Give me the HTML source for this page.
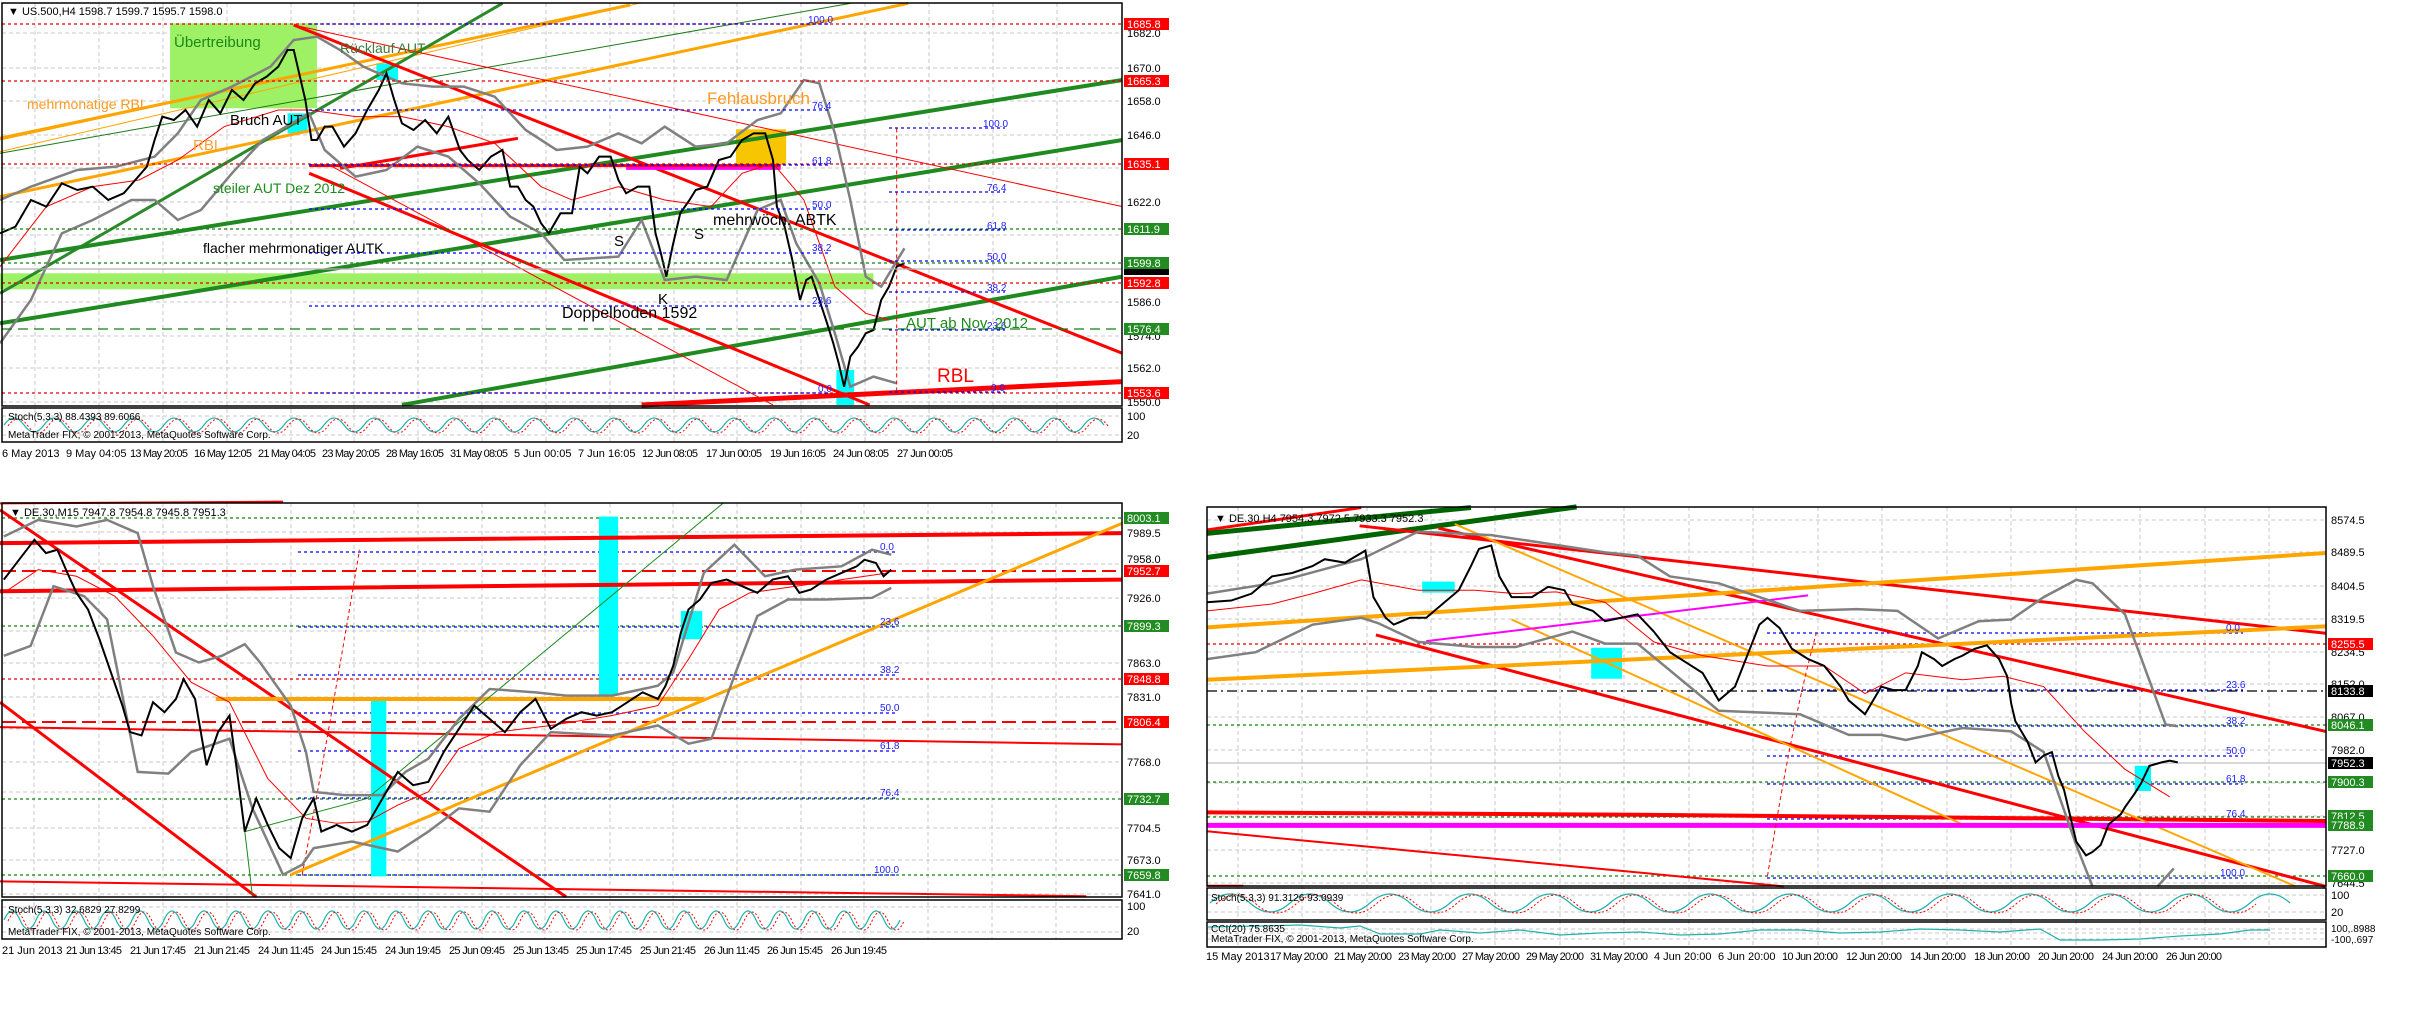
<!DOCTYPE html>
<html><head><meta charset="utf-8"><style>
html,body{margin:0;padding:0;background:#fff;width:2424px;height:1020px;overflow:hidden}
svg{display:block}
text{font-family:"Liberation Sans",sans-serif}
.s *{vector-effect:non-scaling-stroke}
.ax{font-size:11px;fill:#000}
.lb{font-size:11px;fill:#fff}
.fb{font-size:10px;fill:#2020ff}
.dt{font-size:11px;fill:#000}
</style></head><body>
<svg width="2424" height="1020" viewBox="0 0 2424 1020" xmlns="http://www.w3.org/2000/svg">
<defs>
<clipPath id="c1"><rect x="2" y="408" width="1120" height="34"/></clipPath>
<clipPath id="c2"><rect x="2" y="900" width="1120" height="39"/></clipPath>
<clipPath id="c3"><rect x="1207" y="888" width="1119" height="32"/></clipPath>
<clipPath id="c4"><rect x="1207" y="922" width="1119" height="25"/></clipPath>
</defs>
<rect width="2424" height="1020" fill="#fff"/>

<!-- ================= TOP CHART ================= -->
<g stroke="#c8c8c8" stroke-dasharray="4,3" stroke-width="1">
<path d="M35,3V442M99,3V442M163,3V442M227,3V442M291,3V442M354,3V442M418,3V442M482,3V442M546,3V442M610,3V442M674,3V442M737,3V442M801,3V442M865,3V442M929,3V442M993,3V442M1057,3V442"/>
<path d="M2,33H1122M2,68H1122M2,101H1122M2,135H1122M2,168H1122M2,202H1122M2,235H1122M2,302H1122M2,336H1122M2,368H1122M2,402H1122"/>
</g>
<g class="s" transform="scale(0.773,0.3333)">
<rect x="220" y="70" width="190" height="255" fill="#9ef064"/>
<rect x="0" y="820" width="1130" height="48" fill="#9ef064"/>
<rect x="372" y="340" width="26" height="60" fill="#00ffff"/>
<rect x="487" y="190" width="28" height="50" fill="#00ffff"/>
<rect x="1082" y="1110" width="23" height="105" fill="#00ffff"/>
<rect x="952" y="388" width="65" height="107" fill="#f7c600"/>
<g fill="none">
<path d="M0,420L810,15M0,455L830,8" stroke="#ffa500" stroke-width="1"/>
<path d="M0,590L1175,10M0,415L815,15" stroke="#ffa500" stroke-width="3"/>
<path d="M0,460L1100,10" stroke="#1a7a1a" stroke-width="1"/>
<path d="M0,880L650,10" stroke="#2a8a2a" stroke-width="3"/>
<path d="M0,970L1452,420M0,780L1452,240M520,1215L1452,830" stroke="#1f8a1f" stroke-width="4"/>
<path d="M380,75L1452,1060M400,520L1125,1215M400,497H1010" stroke="#ff0000" stroke-width="3"/>
<path d="M440,505L670,415" stroke="#ff0000" stroke-width="3"/>
<path d="M380,75L1452,620M430,500L1000,1215" stroke="#ff0000" stroke-width="1"/>
<path d="M830,1215L1452,1145" stroke="#ff0000" stroke-width="5"/>
<path d="M810,505H1010" stroke="#ff00ff" stroke-width="3"/>
<path d="M0,1030L40,900L80,700L120,660L170,600L200,600L230,660L260,630L300,520L340,420L400,340L420,450L460,530L500,510L540,440L580,470L620,550L660,650L700,700L730,780L800,770L830,660L860,840L900,830L940,840L980,630L1010,600L1030,730L1060,850L1080,1000L1100,1160L1130,1130L1160,1150" stroke="#808080" stroke-width="2.5"/>
<path d="M0,600L40,560L100,510L150,500L200,470L230,400L260,300L300,260L350,200L380,120L410,110L440,150L470,200L520,250L560,260L600,260L640,290L680,390L720,450L760,440L800,400L830,430L860,380L900,440L940,430L980,360L1010,340L1040,240L1060,250L1080,400L1100,600L1120,830L1140,860L1170,745" stroke="#808080" stroke-width="2.5"/>
<path d="M0,800L60,620L120,560L180,540L230,480L290,380L360,330L400,330L460,350L520,350L580,380L640,430L700,560L740,600L800,560L860,600L920,620L960,520L1000,490L1040,600L1080,860L1120,940L1150,960" stroke="#ff0000" stroke-width="1"/>
<path d="M0,700L20,680L40,600L60,620L80,550L100,570L120,560L140,600L160,580L175,540L190,500L200,420L210,350L225,360L240,330L255,380L270,300L285,340L300,270L315,300L330,250L345,230L360,200L372,150L380,150L387,220L395,300L403,420L410,420L420,380L430,380L445,440L460,400L475,330L490,270L500,220L510,300L520,370L535,390L550,360L565,400L580,350L595,450L605,480L620,510L635,470L650,450L660,560L670,560L680,600L690,620L700,670L710,700L725,640L740,640L750,500L760,520L775,470L790,470L800,540L810,580L825,560L840,560L848,700L855,760L862,830L870,740L880,640L892,600L900,570L915,560L930,480L945,470L960,420L975,400L990,400L1000,480L1005,620L1015,680L1025,780L1035,900L1043,840L1050,830L1060,900L1070,970L1078,1030L1085,1090L1092,1160L1100,1070L1110,1040L1120,1000L1130,990L1140,900L1150,860L1160,800L1170,790" stroke="#000" stroke-width="2"/>
<path d="M1160,385V1175" stroke="#ff0000" stroke-width="1" stroke-dasharray="4,3"/>
</g>
</g>
<g fill="none" stroke-width="1.3">
<path d="M2,24H1122M2,81H1122M2,164H1122M2,283H1122M2,393H1122" stroke="#e00000" stroke-dasharray="3,3"/>
<path d="M2,229H1122M2,263H1122" stroke="#108010" stroke-dasharray="3,3"/>
<path d="M2,329H1122" stroke="#108010" stroke-dasharray="10,6"/>
<path d="M2,269H1122" stroke="#b0b0b0"/>
<path d="M309,24H831M309,110H831M309,165H831M309,209H831M309,253H831M309,306H831M309,393H831M889,128H1005M889,192H1005M889,230H1005M889,261H1005M889,292H1005M889,330H1005M889,392H1005" stroke="#0000ff" stroke-dasharray="3,3"/>
</g>
<g class="fb"><text x="808" y="23">100.0</text><text x="812" y="109">76.4</text><text x="812" y="164">61.8</text><text x="812" y="208">50.0</text><text x="812" y="251">38.2</text><text x="812" y="304">23.6</text><text x="818" y="392">0.0</text>
<text x="983" y="127">100.0</text><text x="987" y="191">76.4</text><text x="987" y="229">61.8</text><text x="987" y="260">50.0</text><text x="987" y="291">38.2</text><text x="987" y="329">23.6</text><text x="991" y="391">0.0</text></g>
<g font-size="15">
<text x="174" y="47" fill="#1a8a1a">Übertreibung</text>
<text x="340" y="53" fill="#3a7a3a" font-size="14">Rücklauf AUT</text>
<text x="27" y="109" fill="#ff9a20" font-size="14">mehrmonatige RBL</text>
<text x="230" y="125" fill="#000">Bruch AUT</text>
<text x="193" y="150" fill="#ffa030">RBL</text>
<text x="213" y="193" fill="#1a8a1a" font-size="14">steiler AUT Dez 2012</text>
<text x="203" y="253" fill="#000" font-size="14">flacher mehrmonatiger AUTK</text>
<text x="614" y="246" fill="#000">S</text><text x="694" y="239" fill="#000">S</text>
<text x="713" y="225" fill="#000" font-size="16">mehrwöch. ABTK</text>
<text x="707" y="104" fill="#ff9a20" font-size="17">Fehlausbruch</text>
<text x="658" y="304" fill="#000">K</text>
<text x="562" y="318" fill="#000" font-size="16">Doppelboden 1592</text>
<text x="906" y="328" fill="#1a8a1a">AUT ab Nov. 2012</text>
<text x="937" y="382" fill="#ff0000" font-size="19">RBL</text>
</g>
<text x="8" y="15" font-size="11">▼ US.500,H4  1598.7 1599.7 1595.7 1598.0</text>
<path d="M2,416H1122M2,435H1122" stroke="#c8c8c8" stroke-dasharray="4,3"/>
<g clip-path="url(#c1)" fill="none">
<path d="M4,425 q10,-14 20,0 q10,14 20,0 q10,-14 20,0 q10,14 20,0 q10,-14 20,0 q10,14 20,0 q10,-14 20,0 q10,14 20,0 q10,-14 20,0 q10,14 20,0 q10,-14 20,0 q10,14 20,0 q10,-14 20,0 q10,14 20,0 q10,-14 20,0 q10,14 20,0 q10,-14 20,0 q10,14 20,0 q10,-14 20,0 q10,14 20,0 q10,-14 20,0 q10,14 20,0 q10,-14 20,0 q10,14 20,0 q10,-14 20,0 q10,14 20,0 q10,-14 20,0 q10,14 20,0 q10,-14 20,0 q10,14 20,0 q10,-14 20,0 q10,14 20,0 q10,-14 20,0 q10,14 20,0 q10,-14 20,0 q10,14 20,0 q10,-14 20,0 q10,14 20,0 q10,-14 20,0 q10,14 20,0 q10,-14 20,0 q10,14 20,0 q10,-14 20,0 q10,14 20,0 q10,-14 20,0 q10,14 20,0 q10,-14 20,0 q10,14 20,0 q10,-14 20,0 q10,14 20,0 q10,-14 20,0 q10,14 20,0 q10,-14 20,0 q10,14 20,0 q10,-14 20,0" stroke="#20b2aa" stroke-width="1.2"/>
<path d="M8,426 q10,-14 20,0 q10,14 20,0 q10,-14 20,0 q10,14 20,0 q10,-14 20,0 q10,14 20,0 q10,-14 20,0 q10,14 20,0 q10,-14 20,0 q10,14 20,0 q10,-14 20,0 q10,14 20,0 q10,-14 20,0 q10,14 20,0 q10,-14 20,0 q10,14 20,0 q10,-14 20,0 q10,14 20,0 q10,-14 20,0 q10,14 20,0 q10,-14 20,0 q10,14 20,0 q10,-14 20,0 q10,14 20,0 q10,-14 20,0 q10,14 20,0 q10,-14 20,0 q10,14 20,0 q10,-14 20,0 q10,14 20,0 q10,-14 20,0 q10,14 20,0 q10,-14 20,0 q10,14 20,0 q10,-14 20,0 q10,14 20,0 q10,-14 20,0 q10,14 20,0 q10,-14 20,0 q10,14 20,0 q10,-14 20,0 q10,14 20,0 q10,-14 20,0 q10,14 20,0 q10,-14 20,0 q10,14 20,0 q10,-14 20,0 q10,14 20,0 q10,-14 20,0 q10,14 20,0 q10,-14 20,0 q10,14 20,0 q10,-14 20,0 q10,14 20,0 q10,-14 20,0" stroke="#ff0000" stroke-width="1" stroke-dasharray="2,2"/>
</g>
<text x="8" y="420" font-size="10">Stoch(5,3,3) 88.4393 89.6066</text>
<text x="8" y="438" font-size="10">MetaTrader FIX, © 2001-2013, MetaQuotes Software Corp.</text>
<g fill="none" stroke="#000" stroke-width="1.5"><rect x="2" y="3" width="1120" height="403"/><rect x="2" y="408" width="1120" height="34"/></g>
<g class="ax"><text x="1127" y="37">1682.0</text><text x="1127" y="72">1670.0</text><text x="1127" y="105">1658.0</text><text x="1127" y="139">1646.0</text><text x="1127" y="206">1622.0</text><text x="1127" y="306">1586.0</text><text x="1127" y="340">1574.0</text><text x="1127" y="372">1562.0</text><text x="1127" y="406">1550.0</text><text x="1127" y="420">100</text><text x="1127" y="439">20</text></g>
<g><rect x="1124" y="18" width="45" height="12" fill="#ff0000"/><text class="lb" x="1127" y="28">1685.8</text>
<rect x="1124" y="75" width="45" height="12" fill="#ff0000"/><text class="lb" x="1127" y="85">1665.3</text>
<rect x="1124" y="158" width="45" height="12" fill="#ff0000"/><text class="lb" x="1127" y="168">1635.1</text>
<rect x="1124" y="223" width="45" height="12" fill="#228b22"/><text class="lb" x="1127" y="233">1611.9</text>
<rect x="1124" y="257" width="45" height="12" fill="#228b22"/><text class="lb" x="1127" y="267">1599.8</text>
<rect x="1124" y="269" width="45" height="6" fill="#000"/>
<rect x="1124" y="277" width="45" height="12" fill="#ff0000"/><text class="lb" x="1127" y="287">1592.8</text>
<rect x="1124" y="323" width="45" height="12" fill="#228b22"/><text class="lb" x="1127" y="333">1576.4</text>
<rect x="1124" y="387" width="45" height="12" fill="#ff0000"/><text class="lb" x="1127" y="397">1553.6</text></g>
<g class="dt"><text x="2" y="457">6 May 2013</text><text x="66" y="457">9 May 04:05</text><text x="130" y="457" textLength="58">13 May 20:05</text><text x="194" y="457" textLength="58">16 May 12:05</text><text x="258" y="457" textLength="58">21 May 04:05</text><text x="322" y="457" textLength="58">23 May 20:05</text><text x="386" y="457" textLength="58">28 May 16:05</text><text x="450" y="457" textLength="58">31 May 08:05</text><text x="514" y="457">5 Jun 00:05</text><text x="578" y="457">7 Jun 16:05</text><text x="642" y="457" textLength="56">12 Jun 08:05</text><text x="706" y="457" textLength="56">17 Jun 00:05</text><text x="770" y="457" textLength="56">19 Jun 16:05</text><text x="833" y="457" textLength="56">24 Jun 08:05</text><text x="897" y="457" textLength="56">27 Jun 00:05</text></g>

<!-- ================= BOTTOM LEFT ================= -->
<g stroke="#c8c8c8" stroke-dasharray="4,3" stroke-width="1">
<path d="M34,503V939M99,503V939M163,503V939M227,503V939M291,503V939M354,503V939M418,503V939M482,503V939M545,503V939M610,503V939M673,503V939M737,503V939M801,503V939M864,503V939M928,503V939M992,503V939M1056,503V939"/>
<path d="M2,532H1122M2,564H1122M2,598H1122M2,631H1122M2,663H1122M2,697H1122M2,729H1122M2,762H1122M2,792H1122M2,828H1122M2,860H1122M2,894H1122"/>
</g>
<g fill="none" stroke-width="1.3">
<path d="M2,679H1122" stroke="#e00000" stroke-dasharray="3,3"/>
<path d="M2,571H1122M2,722H1122" stroke="#ff0000" stroke-width="2" stroke-dasharray="14,6"/>
<path d="M2,518H1122M2,626H1122M2,799H1122M2,875H1122" stroke="#108010" stroke-dasharray="3,3"/>
<path d="M298,552H895M298,627H895M298,675H895M298,713H895M298,751H895M298,798H895M298,875H895" stroke="#0000ff" stroke-dasharray="3,3"/>
</g>
<g class="s" transform="translate(0,500) scale(0.765,0.3316)">
<rect x="783" y="50" width="25" height="540" fill="#00ffff"/>
<rect x="485" y="600" width="20" height="535" fill="#00ffff"/>
<rect x="890" y="335" width="28" height="85" fill="#00ffff"/>
<g fill="none">
<path d="M0,130L1467,100M0,275L1467,240" stroke="#ff0000" stroke-width="4"/>
<path d="M0,30L740,1197M0,610L335,1197" stroke="#ff0000" stroke-width="3"/>
<path d="M0,685L1467,737M0,1150L1420,1195M0,10L370,5" stroke="#ff0000" stroke-width="2"/>
<path d="M380,1130L1467,70" stroke="#ffa500" stroke-width="3"/>
<path d="M282,600H920" stroke="#ffa500" stroke-width="4"/>
<path d="M330,1195L320,1000L480,900L945,10" stroke="#1a8a1a" stroke-width="1"/>
<path d="M395,1130Q430,700 470,150" stroke="#ff0000" stroke-width="1" stroke-dasharray="4,3"/>
<path d="M5,110L50,60L100,80L140,60L180,100L200,260L230,460L260,490L290,470L320,435L340,490L380,620L400,760L410,880L450,890L500,890L530,820L560,780L600,660L640,570L700,580L740,590L800,590L860,560L880,520L920,220L960,135L1000,230L1040,210L1100,200L1140,150L1165,165" stroke="#808080" stroke-width="2.5"/>
<path d="M5,470L40,440L70,260L110,290L140,360L180,820L220,825L250,760L300,720L330,930L370,1130L395,1100L410,1050L460,1030L520,1060L560,1000L600,930L640,940L680,800L720,700L800,710L860,680L900,735L930,720L960,530L990,350L1030,300L1080,300L1140,295L1165,265" stroke="#808080" stroke-width="2.5"/>
<path d="M5,280L50,210L100,230L150,290L200,410L250,550L300,610L350,840L400,960L440,975L480,970L520,920L560,880L600,750L650,700L720,680L800,650L860,620L900,480L940,330L980,280L1040,260L1100,240L1160,220" stroke="#ff0000" stroke-width="1"/>
<path d="M5,240L25,180L45,120L60,160L75,150L90,230L100,280L115,330L130,420L145,520L160,620L170,700L185,710L200,610L215,640L230,600L240,540L255,600L270,800L285,700L300,650L310,820L320,1000L335,900L350,980L365,1050L380,1080L395,960L410,900L420,1000L440,980L460,1000L480,980L500,900L520,820L540,860L560,850L580,760L600,690L620,620L640,660L660,700L680,640L700,600L720,690L740,660L760,640L780,650L800,640L820,610L840,580L860,600L870,560L880,500L890,400L900,330L915,300L930,250L950,240L970,260L990,280L1010,240L1030,230L1045,280L1060,270L1080,240L1100,220L1120,200L1130,180L1145,190L1155,230L1165,210" stroke="#000" stroke-width="2"/>
</g>
</g>
<g class="fb"><text x="880" y="550">0.0</text><text x="880" y="625">23.6</text><text x="880" y="673">38.2</text><text x="880" y="711">50.0</text><text x="880" y="749">61.8</text><text x="880" y="796">76.4</text><text x="874" y="873">100.0</text></g>
<text x="10" y="516" font-size="11">▼ DE.30,M15  7947.8 7954.8 7945.8 7951.3</text>
<path d="M2,907H1122M2,932H1122" stroke="#c8c8c8" stroke-dasharray="4,3"/>
<g clip-path="url(#c2)" fill="none">
<path d="M4,920 q8,-18 16,0 q8,18 16,0 q8,-18 16,0 q8,18 16,0 q8,-18 16,0 q8,18 16,0 q8,-18 16,0 q8,18 16,0 q8,-18 16,0 q8,18 16,0 q8,-18 16,0 q8,18 16,0 q8,-18 16,0 q8,18 16,0 q8,-18 16,0 q8,18 16,0 q8,-18 16,0 q8,18 16,0 q8,-18 16,0 q8,18 16,0 q8,-18 16,0 q8,18 16,0 q8,-18 16,0 q8,18 16,0 q8,-18 16,0 q8,18 16,0 q8,-18 16,0 q8,18 16,0 q8,-18 16,0 q8,18 16,0 q8,-18 16,0 q8,18 16,0 q8,-18 16,0 q8,18 16,0 q8,-18 16,0 q8,18 16,0 q8,-18 16,0 q8,18 16,0 q8,-18 16,0 q8,18 16,0 q8,-18 16,0 q8,18 16,0 q8,-18 16,0 q8,18 16,0 q8,-18 16,0 q8,18 16,0 q8,-18 16,0 q8,18 16,0 q8,-18 16,0 q8,18 16,0 q8,-18 16,0 q8,18 16,0 q8,-18 16,0 q8,18 16,0 q8,-18 16,0 q8,18 16,0" stroke="#20b2aa" stroke-width="1.2"/>
<path d="M8,921 q8,-18 16,0 q8,18 16,0 q8,-18 16,0 q8,18 16,0 q8,-18 16,0 q8,18 16,0 q8,-18 16,0 q8,18 16,0 q8,-18 16,0 q8,18 16,0 q8,-18 16,0 q8,18 16,0 q8,-18 16,0 q8,18 16,0 q8,-18 16,0 q8,18 16,0 q8,-18 16,0 q8,18 16,0 q8,-18 16,0 q8,18 16,0 q8,-18 16,0 q8,18 16,0 q8,-18 16,0 q8,18 16,0 q8,-18 16,0 q8,18 16,0 q8,-18 16,0 q8,18 16,0 q8,-18 16,0 q8,18 16,0 q8,-18 16,0 q8,18 16,0 q8,-18 16,0 q8,18 16,0 q8,-18 16,0 q8,18 16,0 q8,-18 16,0 q8,18 16,0 q8,-18 16,0 q8,18 16,0 q8,-18 16,0 q8,18 16,0 q8,-18 16,0 q8,18 16,0 q8,-18 16,0 q8,18 16,0 q8,-18 16,0 q8,18 16,0 q8,-18 16,0 q8,18 16,0 q8,-18 16,0 q8,18 16,0 q8,-18 16,0 q8,18 16,0 q8,-18 16,0 q8,18 16,0" stroke="#ff0000" stroke-width="1" stroke-dasharray="2,2"/>
</g>
<text x="8" y="913" font-size="10">Stoch(5,3,3) 32.6829 27.8299</text>
<text x="8" y="935" font-size="10">MetaTrader FIX, © 2001-2013, MetaQuotes Software Corp.</text>
<g fill="none" stroke="#000" stroke-width="1.5"><rect x="2" y="503" width="1120" height="394"/><rect x="2" y="900" width="1120" height="39"/></g>
<g class="ax"><text x="1127" y="537">7989.5</text><text x="1127" y="563">7958.0</text><text x="1127" y="602">7926.0</text><text x="1127" y="667">7863.0</text><text x="1127" y="701">7831.0</text><text x="1127" y="766">7768.0</text><text x="1127" y="832">7704.5</text><text x="1127" y="864">7673.0</text><text x="1127" y="898">7641.0</text><text x="1127" y="910">100</text><text x="1127" y="935">20</text></g>
<g><rect x="1124" y="512" width="45" height="12" fill="#228b22"/><text class="lb" x="1127" y="522">8003.1</text>
<rect x="1124" y="565" width="45" height="12" fill="#ff0000"/><text class="lb" x="1127" y="575">7952.7</text>
<rect x="1124" y="620" width="45" height="12" fill="#228b22"/><text class="lb" x="1127" y="630">7899.3</text>
<rect x="1124" y="673" width="45" height="12" fill="#ff0000"/><text class="lb" x="1127" y="683">7848.8</text>
<rect x="1124" y="716" width="45" height="12" fill="#ff0000"/><text class="lb" x="1127" y="726">7806.4</text>
<rect x="1124" y="793" width="45" height="12" fill="#228b22"/><text class="lb" x="1127" y="803">7732.7</text>
<rect x="1124" y="869" width="45" height="12" fill="#228b22"/><text class="lb" x="1127" y="879">7659.8</text></g>
<g class="dt"><text x="2" y="954">21 Jun 2013</text><text x="66" y="954" textLength="56">21 Jun 13:45</text><text x="130" y="954" textLength="56">21 Jun 17:45</text><text x="194" y="954" textLength="56">21 Jun 21:45</text><text x="258" y="954" textLength="56">24 Jun 11:45</text><text x="321" y="954" textLength="56">24 Jun 15:45</text><text x="385" y="954" textLength="56">24 Jun 19:45</text><text x="449" y="954" textLength="56">25 Jun 09:45</text><text x="513" y="954" textLength="56">25 Jun 13:45</text><text x="576" y="954" textLength="56">25 Jun 17:45</text><text x="640" y="954" textLength="56">25 Jun 21:45</text><text x="704" y="954" textLength="56">26 Jun 11:45</text><text x="767" y="954" textLength="56">26 Jun 15:45</text><text x="831" y="954" textLength="56">26 Jun 19:45</text></g>

<!-- ================= BOTTOM RIGHT ================= -->
<g stroke="#c8c8c8" stroke-dasharray="4,3" stroke-width="1">
<path d="M1238,507V947M1302,507V947M1367,507V947M1431,507V947M1495,507V947M1560,507V947M1624,507V947M1689,507V947M1753,507V947M1818,507V947M1882,507V947M1947,507V947M2011,507V947M2076,507V947M2140,507V947M2205,507V947M2269,507V947"/>
<path d="M1207,520H2326M1207,552H2326M1207,586H2326M1207,619H2326M1207,652H2326M1207,684H2326M1207,717H2326M1207,750H2326M1207,783H2326M1207,816H2326M1207,850H2326M1207,883H2326"/>
</g>
<g fill="none" stroke-width="1.3">
<path d="M1207,644H2326" stroke="#e00000" stroke-dasharray="3,3"/>
<path d="M1207,691H2326" stroke="#000" stroke-dasharray="10,4,2,4"/>
<path d="M1207,725H2326M1207,782H2326M1207,817H2326M1207,876H2326" stroke="#108010" stroke-dasharray="3,3"/>
<path d="M1207,763H2326" stroke="#c0c0c0"/>
<path d="M1767,633H2243M1767,690H2243M1767,726H2243M1767,756H2243M1767,784H2243M1767,819H2243M1767,878H2243" stroke="#0000ff" stroke-dasharray="3,3"/>
</g>
<g class="s" transform="translate(1150,480) scale(0.8125,0.3444)">
<rect x="335" y="295" width="40" height="32" fill="#00ffff"/>
<rect x="543" y="487" width="38" height="90" fill="#00ffff"/>
<rect x="1212" y="830" width="20" height="73" fill="#00ffff"/>
<g fill="none">
<path d="M70,145L260,80" stroke="#ff0000" stroke-width="3"/>
<path d="M70,155L395,80M70,225L525,78" stroke="#006400" stroke-width="5"/>
<path d="M258,133L1447,445M355,140L1447,730M278,450L1447,1180" stroke="#ff0000" stroke-width="3"/>
<path d="M70,965L600,972L1447,990" stroke="#ff0000" stroke-width="4"/>
<path d="M70,1020L780,1180M70,1178H115" stroke="#ff0000" stroke-width="2"/>
<path d="M70,580L1447,425M70,428L1447,212" stroke="#ffa500" stroke-width="4"/>
<path d="M375,128L1410,1180M445,405L1000,1000" stroke="#ffa500" stroke-width="2"/>
<path d="M340,468L810,335" stroke="#ff00ff" stroke-width="2"/>
<path d="M70,1003H1447" stroke="#ff00ff" stroke-width="5"/>
<path d="M760,1150Q790,700 820,445" stroke="#ff0000" stroke-width="1" stroke-dasharray="4,3"/>
<path d="M70,330L150,300L260,230L330,150L420,160L560,210L600,220L640,280L700,300L800,380L870,375L920,380L970,460L1020,410L1060,405L1100,340L1140,290L1160,300L1200,390L1250,710L1265,715" stroke="#808080" stroke-width="2.5"/>
<path d="M70,520L130,500L200,420L260,400L280,415L330,470L400,485L450,485L520,440L560,475L600,475L700,670L800,680L860,740L900,740L930,755L1000,720L1060,730L1100,790L1140,1060L1160,1180M1240,1180L1260,1128" stroke="#808080" stroke-width="2.5"/>
<path d="M70,380L150,360L200,330L260,290L330,320L400,320L450,330L500,325L560,355L620,470L680,510L760,540L830,540L880,620L930,560L1000,580L1050,570L1100,600L1150,730L1200,840L1255,920" stroke="#ff0000" stroke-width="1"/>
<path d="M70,355L100,350L125,330L150,280L175,270L200,250L215,230L240,240L265,205L275,340L290,400L300,420L320,400L340,400L360,360L380,320L395,250L405,200L420,190L430,280L445,340L470,340L490,310L510,320L520,360L545,380L560,410L580,400L600,390L620,440L640,500L660,530L680,560L700,640L720,600L730,540L740,480L750,420L760,400L775,430L790,490L810,520L830,540L850,600L860,640L880,680L895,620L900,600L915,610L930,610L945,540L950,500L965,520L975,540L990,520L1000,510L1015,490L1030,480L1045,520L1055,570L1060,650L1065,700L1080,760L1090,820L1100,800L1110,790L1118,860L1125,900L1140,1050L1152,1090L1160,1080L1170,1060L1180,1000L1195,970L1200,950L1212,910L1220,880L1230,830L1245,820L1255,815L1265,820" stroke="#000" stroke-width="2"/>
</g>
</g>
<g class="fb"><text x="2226" y="631">0.0</text><text x="2226" y="688">23.6</text><text x="2226" y="724">38.2</text><text x="2226" y="754">50.0</text><text x="2226" y="782">61.8</text><text x="2226" y="817">76.4</text><text x="2220" y="876">100.0</text></g>
<text x="1215" y="522" font-size="11">▼ DE.30,H4  7954.3 7972.5 7933.3 7952.3</text>
<path d="M1207,895H2326M1207,912H2326M1207,929H2326M1207,933H2326M1207,939H2326" stroke="#c8c8c8" stroke-dasharray="4,3"/>
<g clip-path="url(#c3)" fill="none">
<path d="M1210,903 q20,-18 40,0 q20,18 40,0 q20,-18 40,0 q20,18 40,0 q20,-18 40,0 q20,18 40,0 q20,-18 40,0 q20,18 40,0 q20,-18 40,0 q20,18 40,0 q20,-18 40,0 q20,18 40,0 q20,-18 40,0 q20,18 40,0 q20,-18 40,0 q20,18 40,0 q20,-18 40,0 q20,18 40,0 q20,-18 40,0 q20,18 40,0 q20,-18 40,0 q20,18 40,0 q20,-18 40,0 q20,18 40,0 q20,-18 40,0 q20,18 40,0 q20,-18 40,0" stroke="#20b2aa" stroke-width="1.2"/>
<path d="M1216,904 q20,-18 40,0 q20,18 40,0 q20,-18 40,0 q20,18 40,0 q20,-18 40,0 q20,18 40,0 q20,-18 40,0 q20,18 40,0 q20,-18 40,0 q20,18 40,0 q20,-18 40,0 q20,18 40,0 q20,-18 40,0 q20,18 40,0 q20,-18 40,0 q20,18 40,0 q20,-18 40,0 q20,18 40,0 q20,-18 40,0 q20,18 40,0 q20,-18 40,0 q20,18 40,0 q20,-18 40,0 q20,18 40,0 q20,-18 40,0 q20,18 40,0" stroke="#ff0000" stroke-width="1" stroke-dasharray="2,2"/>
</g>
<g clip-path="url(#c4)"><path d="M1208,927 L1260,926 L1300,925 L1340,928 L1360,926 L1380,934 L1420,934 L1440,930 L1480,933 L1520,930 L1560,935 L1600,933 L1640,932 L1680,935 L1720,934 L1760,930 L1800,930 L1840,933 L1880,932 L1920,929 L1960,930 L2000,932 L2040,929 L2060,940 L2100,940 L2140,939 L2180,936 L2220,934 L2250,930 L2270,930" fill="none" stroke="#20b2aa" stroke-width="1.2"/></g>
<text x="1211" y="901" font-size="10">Stoch(5,3,3) 91.3126 93.0939</text>
<text x="1211" y="932" font-size="10">CCI(20) 75.8635</text>
<text x="1211" y="942" font-size="10">MetaTrader FIX, © 2001-2013, MetaQuotes Software Corp.</text>
<g fill="none" stroke="#000" stroke-width="1.5"><rect x="1207" y="507" width="1119" height="379"/><rect x="1207" y="888" width="1119" height="32"/><rect x="1207" y="922" width="1119" height="25"/></g>
<g class="ax"><text x="2331" y="524">8574.5</text><text x="2331" y="556">8489.5</text><text x="2331" y="590">8404.5</text><text x="2331" y="623">8319.5</text><text x="2331" y="656">8234.5</text><text x="2331" y="688">8152.0</text><text x="2331" y="721">8067.0</text><text x="2331" y="754">7982.0</text><text x="2331" y="854">7727.0</text><text x="2331" y="887">7644.5</text><text x="2331" y="899">100</text><text x="2331" y="916">20</text><text x="2331" y="932" font-size="10">100,.8988</text><text x="2331" y="943" font-size="10">-100,.697</text></g>
<g><rect x="2328" y="638" width="45" height="12" fill="#ff0000"/><text class="lb" x="2331" y="648">8255.5</text>
<rect x="2328" y="685" width="45" height="12" fill="#000"/><text class="lb" x="2331" y="695">8133.8</text>
<rect x="2328" y="719" width="45" height="12" fill="#228b22"/><text class="lb" x="2331" y="729">8046.1</text>
<rect x="2328" y="757" width="45" height="12" fill="#000"/><text class="lb" x="2331" y="767">7952.3</text>
<rect x="2328" y="776" width="45" height="12" fill="#228b22"/><text class="lb" x="2331" y="786">7900.3</text>
<rect x="2328" y="810" width="45" height="12" fill="#228b22"/><text class="lb" x="2331" y="820">7812.5</text>
<rect x="2328" y="819" width="45" height="12" fill="#228b22"/><text class="lb" x="2331" y="829">7788.9</text>
<rect x="2328" y="870" width="45" height="12" fill="#228b22"/><text class="lb" x="2331" y="880">7660.0</text></g>
<g class="dt"><text x="1206" y="960">15 May 2013</text><text x="1270" y="960" textLength="58">17 May 20:00</text><text x="1334" y="960" textLength="58">21 May 20:00</text><text x="1398" y="960" textLength="58">23 May 20:00</text><text x="1462" y="960" textLength="58">27 May 20:00</text><text x="1526" y="960" textLength="58">29 May 20:00</text><text x="1590" y="960" textLength="58">31 May 20:00</text><text x="1654" y="960">4 Jun 20:00</text><text x="1718" y="960">6 Jun 20:00</text><text x="1782" y="960" textLength="56">10 Jun 20:00</text><text x="1846" y="960" textLength="56">12 Jun 20:00</text><text x="1910" y="960" textLength="56">14 Jun 20:00</text><text x="1974" y="960" textLength="56">18 Jun 20:00</text><text x="2038" y="960" textLength="56">20 Jun 20:00</text><text x="2102" y="960" textLength="56">24 Jun 20:00</text><text x="2166" y="960" textLength="56">26 Jun 20:00</text></g>
</svg>
</body></html>
